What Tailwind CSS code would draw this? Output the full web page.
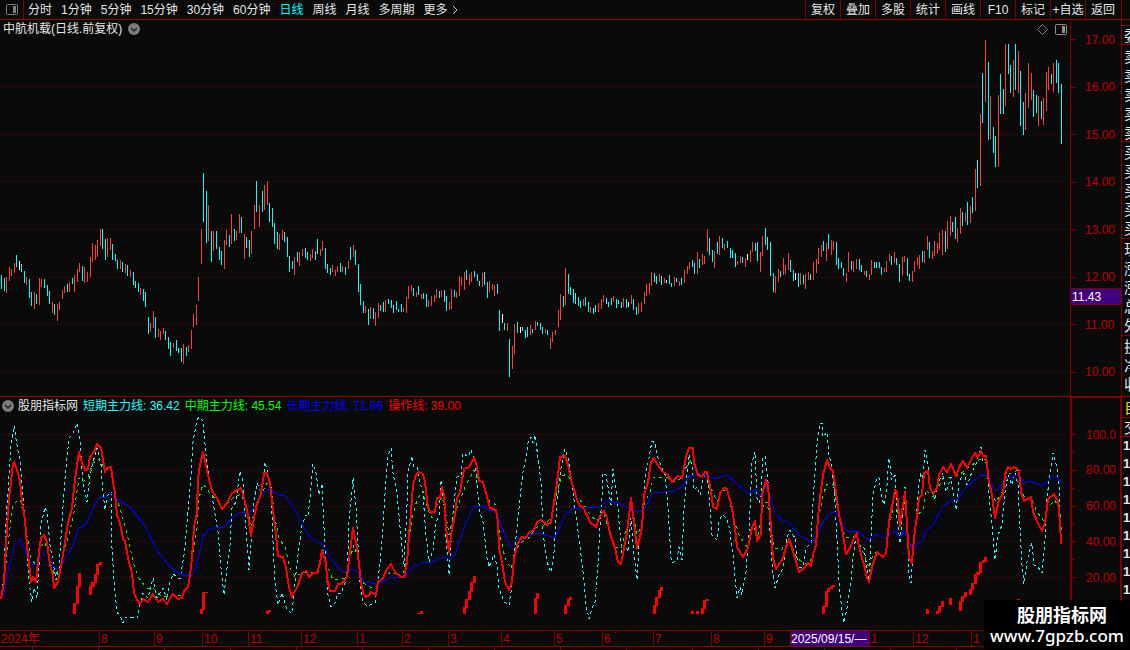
<!DOCTYPE html>
<html lang="zh-CN">
<head>
<meta charset="utf-8">
<title>中航机载 日线</title>
<script src="https://cdn.jsdelivr.net/npm/@tailwindcss/browser@4"></script>
</head>
<body class="flex h-screen flex-col overflow-hidden bg-[#0a0a0a] font-['Liberation_Sans','Noto_Sans_CJK_SC',sans-serif] text-xs leading-none text-[#e6e6e6]">

<header class="flex h-5 shrink-0 border-b border-[#800000]">
  <button aria-label="侧栏" class="flex w-6 items-center justify-center border-r border-[#800000]">
    <svg width="12" height="11" viewBox="0 0 12 11"><rect x="0.5" y="0.5" width="11" height="10" rx="1" fill="none" stroke="#808080"/><rect x="7" y="2" width="3" height="7" fill="#808080"/></svg>
  </button>
  <nav class="flex flex-1 items-center gap-[9px] pl-1 whitespace-nowrap">
    <button>分时</button><button>1分钟</button><button>5分钟</button><button>15分钟</button><button>30分钟</button><button>60分钟</button><button class="text-[#00ffff]">日线</button><button>周线</button><button>月线</button><button>多周期</button>
    <button class="flex items-center gap-1">更多<svg width="6" height="10" viewBox="0 0 6 10" fill="none" stroke="#c8c8c8"><path d="M1 1L5 5L1 9"/></svg></button>
  </nav>
  <div class="flex whitespace-nowrap *:w-[35px] *:border-l *:border-[#800000]">
    <button>复权</button><button>叠加</button><button>多股</button><button>统计</button><button>画线</button><button>F10</button><button>标记</button><button>+自选</button><button>返回</button>
  </div>
  <div class="w-[10px]"><div class="h-full w-[2px] border-r border-[#800000]"></div></div>
</header>

<div class="flex min-h-0 flex-1">
  <main class="flex min-w-0 flex-1 flex-col border-r border-[#800000]">
    <section class="flex min-h-0 flex-[376] border-b border-[#800000]">
      <div class="flex min-w-0 flex-1 flex-col border-r border-[#800000]">
        <div class="flex h-[18px] shrink-0 items-center justify-between pl-[3px] pr-[3px]">
          <h1 class="flex items-center gap-[6px]">中航机载(日线.前复权)
            <svg width="12" height="12" viewBox="0 0 12 12"><circle cx="6" cy="6" r="6" fill="#7c7c7c"/><path d="M3 5L6 8L9 5" fill="none" stroke="#202020" stroke-width="1.4"/></svg>
          </h1>
          <div class="flex items-center gap-[7px]">
            <svg width="11" height="11" viewBox="0 0 11 11"><path d="M5.5 .5L10.500 5.500L5.500 10.500L.5 5.500Z" fill="none" stroke="#808080"/></svg>
            <svg width="12" height="11" viewBox="0 0 12 11"><rect x=".5" y=".5" width="11" height="10" rx="1" fill="none" stroke="#909090"/><rect x="7" y="2" width="3" height="7" fill="#909090"/></svg>
          </div>
        </div>
        <svg id="price" class="block min-h-0 w-full flex-1" viewBox="0 38 1070 358" preserveAspectRatio="none" shape-rendering="crispEdges" fill="none">
          <path d="M1 86.500H1069M1 134.500H1069M1 181.500H1069M1 229.500H1069M1 277.500H1069M1 324.500H1069M1 372.500H1069" stroke="#700808" stroke-dasharray="1 3"/>
        </svg>
      </div>
      <div class="relative flex w-[50px] flex-col">
        <div id="priceAxis" class="flex flex-1 flex-col justify-between pt-[19px] pb-[23px] text-[#c00000]"></div>
        <div class="absolute inset-x-0 top-[268px] flex h-[17px] items-center border-y border-[#800000] bg-[#400080] pl-px text-white">11.43</div>
      </div>
    </section>
    <section class="flex min-h-0 flex-[233]">
      <div class="flex min-w-0 flex-1 flex-col">
        <div class="flex h-[17px] shrink-0 items-center gap-[5px] pl-[2px] whitespace-nowrap">
          <svg class="-mr-px" width="12" height="12" viewBox="0 0 12 12"><circle cx="6" cy="6" r="6" fill="#7c7c7c"/><path d="M3 5L6 8L9 5" fill="none" stroke="#202020" stroke-width="1.400"/></svg>
          <span>股朋指标网</span>
          <span class="text-[#20ffff]">短期主力线: 36.42</span>
          <span class="text-[#00ff00]">中期主力线: 45.54</span>
          <span class="text-[#0000ff]">长期主力线: 71.86</span>
          <span class="text-[#ff0000]">操作线: 39.00</span>
        </div>
        <svg id="osc" class="block min-h-0 w-full flex-1" viewBox="0 414 1070 216" preserveAspectRatio="none" shape-rendering="crispEdges" fill="none">
          <path d="M1 434.500H1069M1 470.500H1069M1 506.500H1069M1 541.500H1069M1 577.500H1069" stroke="#700808" stroke-dasharray="1 3"/>
        </svg>
      </div>
      <div class="flex w-[51px] flex-col border-t border-r border-l-2 border-[#800000]">
        <div id="oscAxis" class="flex flex-1 flex-col justify-between pt-[36px] pb-[52px] text-[#c00000]"></div>
      </div>
    </section>
    <div id="months" class="flex h-[17px] shrink-0 border-y border-[#800000] text-xs text-[#c00000]"></div>
    <div class="flex h-[3px] shrink-0 justify-around overflow-hidden *:w-px *:bg-[#800000]"><i></i><i></i><i></i><i></i><i></i><i></i><i></i><i></i><i></i><i></i><i></i><i></i><i></i><i></i><i></i><i></i><i></i></div>
  </main>
  <aside class="w-2 shrink-0 overflow-hidden text-[15px] whitespace-nowrap">
    <div class="mt-[5px] flex h-5 items-center border-y border-[#800000] pl-[2px]">委比</div>
    <div class="h-[97px] border-b border-[#800000] pt-[2px] pl-[2px] leading-[19px]">卖五<br>卖四<br>卖三<br>卖二<br>卖一</div>
    <div class="h-[97px] border-b border-[#800000] pt-[1px] pl-[2px] leading-[19px]">买一<br>买二<br>买三<br>买四<br>买五</div>
    <div class="h-[97px] border-b border-[#800000] pt-[1px] pl-[2px] leading-[19px]">现价<br>涨跌<br>涨幅<br>总量<br>外盘</div>
    <div class="h-[61px] border-b border-[#800000] pt-[1px] pl-[2px] leading-[19px]">换手<br>净资<br>收益</div>
    <div class="flex h-[21px] items-center border-b border-[#800000] pl-[2px] text-[#e0e000]">自</div>
    <div class="flex h-[19px] items-center border-b border-[#800000] pl-[2px]">交</div>
    <div class="pl-px text-[13px] leading-[18px] font-bold">1<br>1<br>1<br>1<br>1<br>1<br>1<br>1<br>1</div>
  </aside>
</div>

<a href="#" class="fixed right-0 bottom-0 flex h-[50px] w-[146px] flex-col items-center justify-center gap-px bg-black text-white">
  <span class="pl-[10px] text-[18px] leading-5 font-bold">股朋指标网</span>
  <span class="font-['Noto_Sans'] text-[17px] leading-[18px] font-medium">www.7gpzb.com</span>
</a>

<script>
// Daily high-low bars, "x top bottom" per bar
const up = `6 277 293,9 267 281,11 269 276,14 263 273,26 277 285,34 292 309,39 278 305,41 279 287,52 302 313,57 304 321,59 302 310,62 290 299,64 286 293,69 282 292,74 275 292,77 269 282,79 263 272,84 267 283,87 272 282,90 257 277,92 243 262,95 245 260,97 240 257,100 229 246,107 238 257,110 238 250,120 260 269,125 264 273,130 270 277,140 288 295,150 323 332,153 311 328,158 329 337,160 331 340,163 328 334,173 343 348,183 344 364,188 345 352,191 330 349,193 314 327,196 305 325,198 277 301,201 229 264,208 205 241,213 231 251,224 240 269,226 230 245,231 214 244,236 231 240,239 214 233,244 234 259,251 231 254,254 205 229,259 205 227,264 185 210,267 181 205,279 234 250,282 230 240,294 257 275,299 252 266,302 249 256,310 254 261,312 249 258,320 249 256,322 241 251,332 265 272,335 270 276,337 266 272,342 266 272,348 261 269,353 245 257,365 306 313,370 307 319,375 312 326,378 303 318,385 300 312,403 308 312,406 297 313,408 286 299,411 285 291,416 292 297,421 294 299,428 300 307,431 296 306,434 295 302,436 289 298,441 290 297,449 302 310,451 289 309,456 292 298,459 276 296,461 277 286,464 272 290,469 274 285,471 272 282,482 273 287,489 281 292,492 284 290,494 285 296,507 323 331,512 346 369,514 324 354,530 325 335,535 321 330,545 329 333,550 338 349,552 332 342,555 330 335,558 310 327,560 294 320,565 268 305,583 299 306,590 307 313,598 303 312,601 299 309,603 295 302,613 296 302,623 298 307,631 295 304,638 303 314,641 302 312,644 292 304,646 284 296,649 283 294,651 272 286,659 274 282,664 278 283,674 277 286,679 281 286,684 270 283,687 266 274,689 262 269,697 252 274,702 254 265,704 256 264,707 229 252,714 251 268,719 236 255,724 244 250,737 261 265,740 256 263,745 258 267,750 250 262,752 242 252,760 252 272,762 236 256,775 276 293,778 269 282,783 258 275,785 265 274,788 253 270,800 273 285,805 274 289,808 272 280,813 262 280,816 259 273,818 248 264,821 245 257,826 243 261,831 240 255,833 241 250,846 273 282,848 252 272,853 261 272,856 259 269,864 271 275,869 274 280,871 260 275,884 268 272,886 261 272,889 254 261,894 252 263,902 257 276,904 256 262,912 271 282,914 261 272,917 257 265,919 255 269,924 251 263,927 236 250,932 251 259,934 241 256,937 243 254,939 233 250,942 230 255,947 221 249,950 216 236,957 228 242,960 208 234,965 213 222,970 206 223,975 169 211,980 114 186,985 40 102,990 96 139,998 95 167,1005 44 106,1013 60 97,1018 51 93,1025 93 130,1028 63 108,1031 73 100,1038 96 126,1043 98 125,1046 72 111,1048 67 90,1053 63 92`;
const down = `1 275 289,4 278 291,16 255 267,21 264 272,24 271 283,29 279 298,31 292 306,36 294 304,44 279 288,47 285 296,49 291 304,54 304 315,67 284 292,72 278 284,82 266 281,102 229 249,105 239 260,112 244 260,115 254 261,117 260 269,122 262 272,127 265 276,133 272 285,135 281 288,138 283 292,143 289 301,145 292 307,148 317 334,155 317 338,165 331 340,168 337 349,170 342 356,176 340 351,178 348 353,181 348 362,186 347 356,203 173 222,206 191 243,211 231 262,216 231 249,219 247 260,221 251 265,229 235 247,234 229 241,241 217 233,246 237 248,249 240 257,256 181 212,262 191 212,269 203 222,272 208 227,274 223 244,277 232 249,284 232 242,287 237 257,289 256 272,292 261 269,297 252 262,305 248 258,307 252 260,315 251 260,317 239 254,325 248 269,327 264 273,330 268 275,340 263 272,345 267 275,350 247 260,355 250 265,358 264 292,360 284 305,363 301 313,368 309 325,373 308 319,380 305 311,383 302 312,388 299 304,391 300 308,393 305 313,396 301 310,398 309 312,401 304 312,413 288 296,418 286 295,423 293 299,426 294 307,439 291 298,444 290 302,446 296 311,454 290 297,466 270 280,474 271 277,477 274 281,479 281 286,484 272 285,487 282 298,497 284 294,499 310 331,504 323 330,509 339 377,517 322 333,522 327 331,525 330 338,527 327 337,532 329 333,537 322 326,540 323 330,542 327 334,547 330 335,563 296 307,568 274 294,570 287 295,573 289 303,575 293 304,578 297 306,580 301 308,585 297 306,588 302 312,593 308 314,595 305 312,606 298 304,608 302 307,611 298 305,616 299 308,618 300 304,621 302 308,626 299 308,633 299 310,636 307 315,654 273 282,656 276 284,661 276 285,669 275 284,671 283 287,676 278 282,681 278 285,692 260 267,694 263 274,699 259 268,709 238 255,712 250 262,717 242 254,722 238 248,727 241 248,730 248 258,732 250 258,735 253 267,742 257 263,755 243 251,757 242 261,765 228 245,767 237 250,770 242 276,773 273 292,780 271 277,790 260 272,793 270 281,798 273 287,803 275 284,810 274 280,823 241 251,828 234 249,836 242 265,838 258 269,841 262 268,843 268 276,851 261 270,859 259 270,861 265 272,866 271 277,874 262 268,876 262 268,879 262 268,881 267 275,891 256 265,896 258 265,899 264 282,907 258 276,909 274 281,922 251 262,929 242 258,945 231 252,952 222 232,955 217 239,962 212 226,967 202 225,972 197 213,977 160 188,982 73 123,988 62 140,993 127 153,995 136 167,1000 74 114,1003 89 114,1008 44 74,1010 65 93,1015 44 90,1020 71 126,1023 102 135,1033 90 117,1036 95 113,1041 101 119,1051 74 84,1056 60 83,1058 63 93,1061 84 144`;
const flat = `19 261 270,502 314 323,520 327 333,628 302 307,666 280 283,747 254 260,795 273 280`;

const NS = 'http://www.w3.org/2000/svg';
function path(svg, d, attrs) {
  const p = document.createElementNS(NS, 'path');
  p.setAttribute('d', d);
  for (const k in attrs) p.setAttribute(k, attrs[k]);
  svg.appendChild(p);
}
const price = document.getElementById('price');
const bars = s => s.split(',').map(b => { const [x, t, e] = b.split(' '); return `M${+x + .5} ${t}V${e}`; }).join('');
path(price, bars(up), { stroke: '#ff3c3c' });
path(price, bars(down), { stroke: '#00ffff' });
path(price, bars(flat), { stroke: '#ffffff' });

// Oscillator lines as x,y pairs
const longLine = '1,599 5,590 7,575 11,558 15,544 20,539 24,547 28,558 32,564 37,565 40,557 44,553 48,557 55,568 60,568 67,555 72,547 79,528 83,527 88,520 97,500 101,497 106,498 111,493 117,499 132,509 144,525 157,550 170,567 182,575 191,576 196,568 203,537 208,530 217,527 223,528 233,517 241,512 250,512 255,507 262,493 268,489 279,495 285,496 295,509 302,524 310,537 320,543 322,543 330,558 343,572 353,569 357,572 365,582 377,584 392,577 404,578 411,568 423,562 430,563 444,557 450,560 455,555 465,525 474,506 483,506 490,511 496,510 502,528 510,547 518,539 537,533 549,536 554,538 558,532 565,515 573,509 598,507 608,501 617,503 630,508 637,512 644,510 653,493 673,491 682,487 690,475 707,475 715,479 727,475 737,484 749,494 755,489 760,496 766,485 770,497 775,513 783,522 788,521 800,536 812,542 817,535 825,518 834,511 839,518 847,532 857,531 869,540 877,534 885,538 895,531 900,537 905,531 912,549 922,541 927,530 933,525 942,508 952,499 957,500 963,491 980,475 987,476 996,491 1008,478 1019,475 1024,483 1031,481 1042,486 1053,477 1058,477 1062,484';
const midLine = '1,599 4,585 7,552 10,528 13,505 19,499 21,502 25,525 31,558 37,567 40,547 45,542 50,562 55,575 60,568 65,547 69,535 74,512 79,478 83,482 88,477 93,463 99,459 105,470 111,468 115,495 120,508 127,533 133,562 139,578 147,589 153,588 160,595 168,597 175,595 182,595 188,585 192,560 197,528 199,498 203,484 210,493 218,502 223,508 233,498 241,494 247,510 252,527 257,505 262,493 267,483 271,488 275,518 279,538 285,547 290,568 295,577 303,572 318,572 323,550 327,565 333,580 345,578 350,558 354,545 357,555 362,582 370,587 376,590 380,580 391,572 403,577 407,555 412,518 417,500 423,491 427,508 432,518 437,505 442,497 445,508 449,535 453,518 459,503 465,487 474,470 478,480 483,483 488,500 496,505 500,535 505,558 511,569 515,553 520,543 527,540 537,527 543,526 551,518 557,492 562,476 567,474 572,482 577,498 583,503 590,515 597,521 603,511 608,527 615,547 621,549 625,533 628,525 631,502 637,535 642,525 645,502 650,492 653,478 667,477 673,482 682,478 687,465 692,459 697,470 700,476 707,472 711,488 717,502 722,490 727,490 733,515 739,535 747,547 753,525 758,538 762,512 764,502 767,502 771,525 774,548 781,550 789,540 797,558 805,564 810,562 815,547 817,528 823,495 827,484 833,484 839,515 845,537 852,538 856,535 863,552 869,568 873,555 877,552 885,557 889,525 893,510 897,510 901,520 905,502 908,545 913,547 917,515 923,510 926,490 933,497 943,478 955,477 963,472 972,465 982,458 986,460 990,488 996,502 1002,492 1007,475 1018,470 1022,492 1025,498 1031,497 1037,512 1044,521 1048,507 1055,500 1060,512 1062,538';
const shortLine = '1,599 4,575 6,522 9,475 11,445 14,426 17,445 20,462 23,498 26,532 29,582 32,602 34,588 37,598 39,565 41,525 45,507 47,513 50,545 53,562 56,580 59,568 62,522 65,478 69,438 73,434 77,423 80,442 83,482 87,502 90,475 93,462 97,448 101,465 103,492 105,510 108,495 111,492 112,548 114,582 117,612 120,616 123,623 126,617 137,618 140,605 143,593 148,598 153,578 157,598 163,588 167,600 170,582 173,574 180,579 184,555 187,525 191,475 193,442 197,420 199,417 203,421 206,455 210,482 213,502 218,532 221,568 224,595 227,568 230,545 232,508 236,502 240,471 243,482 246,528 249,570 252,532 254,502 257,483 261,492 263,485 265,462 267,470 271,487 273,542 275,582 278,605 282,593 287,610 292,613 295,582 298,555 302,525 306,515 308,517 311,488 313,464 316,473 319,495 322,484 324,528 326,568 328,595 331,607 335,603 338,593 341,593 347,578 349,522 353,478 356,508 358,545 360,582 363,602 367,606 375,603 377,588 380,562 383,528 386,478 388,455 391,448 393,473 397,492 401,538 404,567 407,505 408,472 412,456 414,467 417,467 420,482 423,495 426,535 429,562 433,550 436,522 439,515 441,480 444,505 447,552 449,575 452,525 454,502 457,477 461,475 463,453 468,457 471,450 475,462 477,485 480,513 483,522 487,558 489,567 494,555 497,565 499,588 504,602 509,605 511,592 514,555 517,528 520,498 523,472 526,458 528,443 531,437 533,443 535,435 538,458 541,482 543,532 547,562 551,572 554,552 557,502 561,468 565,449 568,458 571,477 575,508 579,538 583,572 586,605 589,619 592,608 595,602 598,565 600,528 602,495 603,473 606,475 611,505 613,469 617,495 619,522 622,555 625,542 628,552 631,518 633,545 637,580 639,542 642,522 645,478 649,458 652,441 655,443 658,458 665,475 668,508 671,558 673,563 677,560 679,547 682,560 684,508 687,475 689,455 692,465 694,490 697,487 700,495 703,478 707,473 709,495 712,535 717,540 719,522 722,515 727,518 730,532 733,555 737,598 740,587 742,595 746,572 749,532 752,462 755,452 757,498 759,503 761,492 763,458 765,456 768,482 770,532 773,575 775,588 779,575 783,568 787,538 790,530 795,538 798,568 803,567 806,548 811,543 813,502 815,472 817,445 820,424 822,423 823,437 827,432 829,455 832,468 834,488 837,538 839,582 842,612 844,623 847,608 851,582 853,558 856,535 859,545 864,548 867,568 869,580 871,538 873,495 877,477 879,478 882,498 884,505 887,485 889,458 892,480 895,475 897,518 900,543 902,518 905,487 907,522 909,575 911,583 913,555 916,522 919,482 921,473 923,478 925,450 927,458 930,485 935,500 937,485 943,473 946,492 951,477 953,492 956,510 959,482 964,473 967,485 972,472 977,462 981,447 983,462 987,462 989,495 992,525 995,560 998,535 1002,525 1005,492 1008,475 1012,485 1015,473 1018,485 1020,528 1022,565 1024,584 1027,562 1030,548 1032,543 1034,565 1038,567 1042,573 1045,538 1047,498 1050,473 1053,453 1057,468 1059,485 1060,528 1061,545';
const tradeLine = '1,599 4,582 7,528 9,498 11,482 13,464 14,462 17,470 20,480 22,502 25,520 27,545 31,582 33,577 36,582 39,552 41,538 44,535 47,542 50,565 53,575 54,588 58,582 62,560 65,542 68,523 72,508 74,488 77,465 79,452 82,463 85,470 88,469 90,457 94,452 97,444 101,448 103,460 105,472 107,468 111,467 113,482 115,493 117,515 120,523 123,539 125,541 128,558 132,573 134,593 137,600 140,604 143,599 148,602 153,594 158,602 163,599 167,604 170,598 173,594 178,599 182,598 184,591 188,587 190,575 192,558 194,528 197,512 198,478 200,465 203,452 206,465 208,475 212,491 217,498 222,509 227,503 232,493 241,488 245,502 248,515 251,536 254,518 257,503 260,497 262,488 264,473 267,473 270,483 273,510 276,535 278,556 283,557 286,568 289,587 292,597 296,589 298,585 302,573 306,571 309,577 313,573 317,573 320,563 322,550 326,563 327,578 330,591 335,591 338,584 341,584 344,581 347,577 350,552 353,528 355,537 358,555 361,582 363,593 366,597 369,595 371,592 376,595 378,582 383,578 387,569 391,564 395,572 401,577 404,577 407,563 409,535 411,512 413,485 416,475 419,472 423,474 425,482 428,508 432,513 435,511 437,498 440,498 442,487 444,495 446,528 449,552 452,528 455,515 457,498 460,492 464,469 469,467 474,458 477,466 479,481 483,482 487,497 490,508 496,510 498,522 499,547 502,562 505,582 509,590 512,582 514,558 517,545 522,537 525,538 530,532 534,530 537,522 541,520 547,525 551,522 554,503 557,483 560,457 565,456 568,465 572,483 577,500 580,506 583,507 590,522 596,527 600,516 604,511 607,518 610,533 615,548 618,562 621,564 624,548 627,533 629,515 631,498 633,515 637,548 640,537 642,527 644,495 648,482 651,462 654,458 657,464 663,472 668,475 672,482 678,476 682,478 684,467 687,453 689,448 693,448 694,463 698,475 702,477 705,472 707,472 711,492 713,507 717,509 720,493 724,488 727,489 732,508 735,528 737,547 743,557 748,548 752,527 755,521 757,541 761,534 762,495 766,480 768,485 771,528 773,558 776,569 783,558 786,547 789,539 792,548 795,558 799,572 803,569 808,563 811,566 813,555 816,545 818,518 820,498 823,475 827,460 830,468 833,471 836,492 839,515 842,528 846,554 850,548 853,540 857,533 858,542 862,558 865,568 867,578 869,582 872,567 877,552 883,557 886,553 888,532 890,515 893,502 895,490 897,492 900,526 903,505 905,492 907,525 909,558 912,563 914,538 917,515 919,498 922,495 924,473 928,471 930,488 933,494 937,488 939,475 943,467 947,472 951,464 956,476 960,465 963,461 967,468 972,458 975,453 978,457 981,451 983,456 986,456 989,482 992,495 995,518 999,500 1003,494 1005,475 1008,467 1011,469 1014,467 1019,470 1021,492 1024,501 1031,497 1033,512 1038,523 1042,531 1045,523 1048,499 1054,494 1058,501 1060,522 1061,544';
// Signal blocks: x, top, width, bottom
const blocks = '73 603 3 614,76 586 3 604,78 573 3 587,89 586 3 595,91 582 4 587,94 574 3 583,96 564 3 575,99 562 3 565,200 609 3 614,202 592 3 610,202 592 6 593,266 611 3 614,268 610 3 612,417 613 6 614,420 611 3 614,463 607 3 614,465 599 3 608,468 591 3 600,470 582 3 592,473 576 3 583,534 598 3 614,536 593 3 599,564 605 3 614,567 599 3 606,569 597 3 600,653 605 3 614,655 597 3 606,658 590 3 598,660 587 3 591,691 611 3 614,696 611 3 614,701 608 3 614,703 600 3 609,706 599 3 601,822 606 3 614,825 591 3 607,827 588 3 592,830 586 3 589,832 585 3 587,926 609 3 614,936 611 3 614,938 606 3 612,941 601 3 607,949 598 3 605,959 601 3 611,961 596 3 602,964 592 3 597,969 589 3 595,971 583 3 590,974 574 3 584,976 572 4 575,979 562 3 573,982 560 3 563,984 557 3 562,1017 599 3 600';
const osc = document.getElementById('osc');
path(osc, 'M' + shortLine, { stroke: '#20ffff', 'stroke-dasharray': '3 3' });
path(osc, 'M' + midLine, { stroke: '#00ff00', 'stroke-dasharray': '3 4' });
path(osc, 'M' + longLine, { stroke: '#0000ff' });
path(osc, 'M' + tradeLine, { stroke: '#ff0000', 'stroke-width': 2, 'stroke-linejoin': 'round' });
path(osc, blocks.split(',').map(b => { const [x, t, w, e] = b.split(' '); return `M${x} ${t}h${w}V${e}h-${w}z`; }).join(''), { fill: '#ff0000' });

const axis = (id, labels) => {
  document.getElementById(id).innerHTML = labels.map(t => t
    ? `<div class="flex h-px items-center gap-[9px]"><i class="h-px w-[5px] bg-[#800000]"></i><span>${t}</span></div>`
    : '<i class="h-px w-[2px] bg-[#800000]"></i>').join('');
};
axis('priceAxis', ['17.00', '', '16.00', '', '15.00', '', '14.00', '', '13.00', '', '12.00', '', '11.00', '', '10.00']);
axis('oscAxis', ['100.0', '', '80.00', '', '60.00', '', '40.00', '', '20.00']);

const months = [['2024年', 99], ['8', 55], ['9', 48], ['10', 46], ['11', 53], ['12', 56], ['1', 45], ['2', 46], ['3', 53], ['4', 53], ['5', 48], ['6', 51], ['7', 58], ['8', 53], ['9', 26], ['2025/09/15/—', 79], ['1', 44], ['12', 58], ['1', 150]];
document.getElementById('months').innerHTML = months.map(([t, n], i) => {
  const w = `style="width:${n / 1121 * 100}%"`;
  if (n === 79) return `<div ${w} class="flex shrink-0 items-center border-l border-[#800000] bg-[#400080] text-xs whitespace-nowrap text-white">${t}</div>`;
  return `<div ${w} class="flex shrink-0 flex-col ${i ? 'border-l border-[#800000]' : ''}"><div class="flex h-[2px] justify-evenly">${n > 30 ? '<i class="w-px bg-[#800000]"></i>'.repeat(3) : ''}</div><span class="pl-px leading-[13px] whitespace-nowrap">${t}</span></div>`;
}).join('');
</script>
</body>
</html>
